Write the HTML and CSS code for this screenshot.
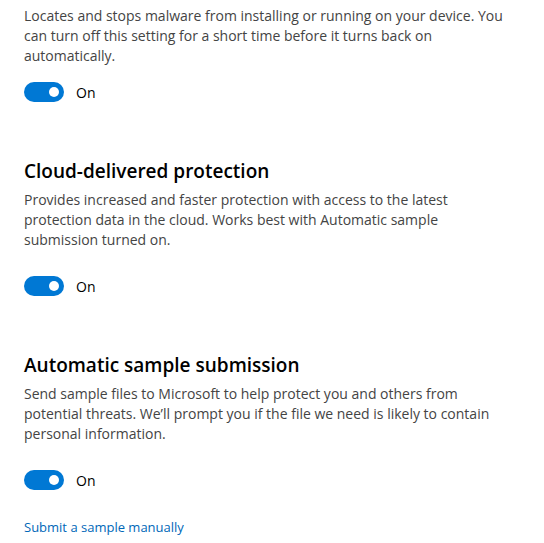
FILE: index.html
```html
<!DOCTYPE html>
<html>
<head>
<meta charset="utf-8">
<link rel="stylesheet" href="styles.css">
</head>
<body>
<div class="page">
  <section class="setting first">
    <p class="desc">Locates and stops malware from installing or running on your device. You<br>can turn off this setting for a short time before it turns back on<br>automatically.</p>
    <div class="toggle-row"><span class="toggle"><span class="knob"></span></span><span class="state">On</span></div>
  </section>
  <section class="setting">
    <h2 class="title">Cloud-delivered protection</h2>
    <p class="desc">Provides increased and faster protection with access to the latest<br>protection data in the cloud. Works best with Automatic sample<br>submission turned on.</p>
    <div class="toggle-row"><span class="toggle"><span class="knob"></span></span><span class="state">On</span></div>
  </section>
  <section class="setting">
    <h2 class="title">Automatic sample submission</h2>
    <p class="desc">Send sample files to Microsoft to help protect you and others from<br>potential threats. We’ll prompt you if the file we need is likely to contain<br>personal information.</p>
    <div class="toggle-row"><span class="toggle"><span class="knob"></span></span><span class="state">On</span></div>
    <a class="link" href="#">Submit a sample manually</a>
  </section>
</div>
</body>
</html>
```
FILE: styles.css
```css
html, body { margin: 0; padding: 0; background: #fff; }
body { font-family: "Open Sans", "Noto Sans", sans-serif; color: #000; }
.page { padding: 6px 0 0 24px; width: 510px; }
.setting { display: flex; flex-direction: column; align-items: flex-start; }
.title { margin: 56px 0 0; font-size: 19px; font-weight: 600; line-height: 26px; color: #000; }
.desc { margin: 6px 0 0; font-size: 14px; line-height: 20px; color: #444; white-space: nowrap; }
.first .desc { margin-top: 0; }
.toggle-row { display: flex; align-items: center; gap: 12px; margin-top: 26px; height: 20px; }
.first .toggle-row { margin-top: 16px; }
.toggle { width: 40px; height: 20px; border-radius: 10px; background: #0078d4; position: relative; display: block; }
.knob { position: absolute; width: 10px; height: 10px; border-radius: 50%; background: #fff; right: 5px; top: 5px; }
.state { font-size: 14px; color: #000; }
.link { margin-top: 28px; font-size: 13px; color: #0067b8; text-decoration: none; }
```
